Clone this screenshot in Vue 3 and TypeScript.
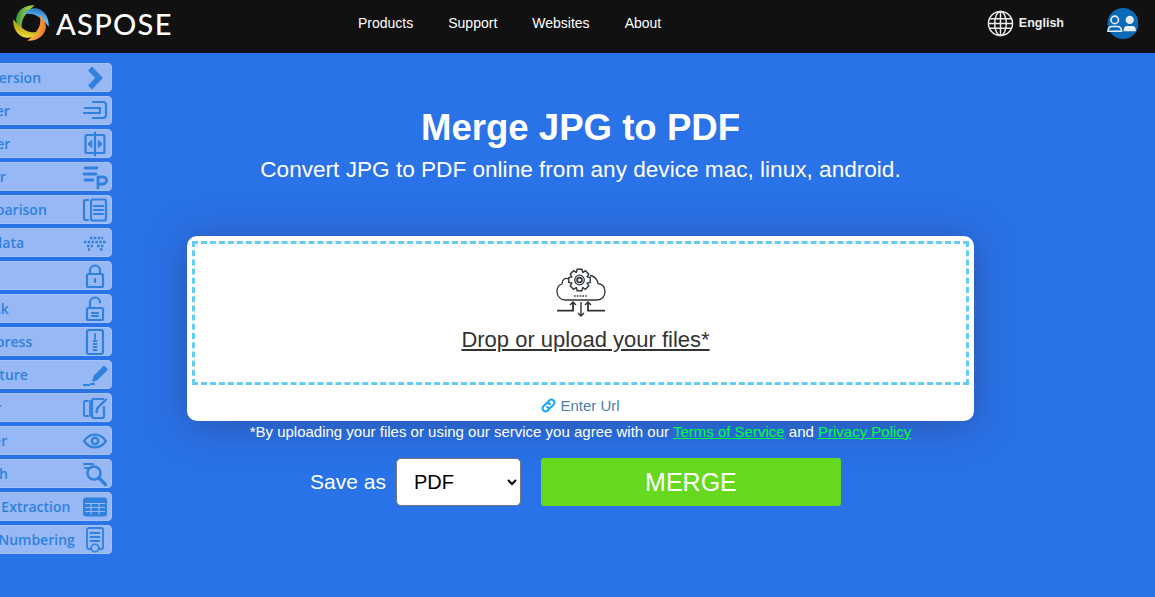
<script setup lang="ts">
const navLinks = ["Products", "Support", "Websites", "About"];

const sideItems = [
  { label: "Conversion", icon: "chevron", shift: 0 },
  { label: "Merger", icon: "merge", shift: 4 },
  { label: "Splitter", icon: "split", shift: 4 },
  { label: "Parser", icon: "parser", shift: 3 },
  { label: "Comparison", icon: "compare", shift: 0 },
  { label: "Metadata", icon: "meta", shift: 6 },
  { label: "Lock", icon: "lock", shift: 0, hidden: true },
  { label: "Unlock", icon: "unlock", shift: 3 },
  { label: "Compress", icon: "zip", shift: 0 },
  { label: "Signature", icon: "sign", shift: 2 },
  { label: "Editor", icon: "edit", shift: 4 },
  { label: "Viewer", icon: "eye", shift: 4 },
  { label: "Search", icon: "search", shift: 3 },
  { label: "Table Extraction", icon: "table", shift: 4 },
  { label: "Page Numbering", icon: "number", shift: 3 },
];

const blades = [
  { angle: 0, id: "blade-green", dark: "#2f9440", light: "#9ccb3b" },
  { angle: 90, id: "blade-blue", dark: "#2378c4", light: "#68bce8" },
  { angle: 180, id: "blade-orange", dark: "#ee7b22", light: "#f9a54a" },
  { angle: 270, id: "blade-yellow", dark: "#f4e03a", light: "#b9a81c" },
];

// gear outline for the upload icon, 8 teeth round (24.5, 14)
const gearPath = (() => {
  const points: string[] = [];
  for (let i = 0; i < 8; i++) {
    const a = (i * Math.PI) / 4;
    const steps: [number, number][] = [
      [8.3, -0.38],
      [11, -0.22],
      [11, 0.22],
      [8.3, 0.38],
    ];
    for (const [r, off] of steps) {
      const x = 24.5 + r * Math.cos(a + off);
      const y = 14 + r * Math.sin(a + off);
      points.push(`${x.toFixed(2)} ${y.toFixed(2)}`);
    }
  }
  return `M${points.join("L")}Z`;
})();
</script>

<template>
  <div class="page">
    <header class="topbar">
      <a class="logo">
        <svg width="36" height="36" viewBox="0 0 36 36" class="logo-mark">
          <defs>
            <linearGradient
              v-for="blade in blades"
              :id="blade.id"
              :key="blade.id"
              gradientUnits="userSpaceOnUse"
              x1="3"
              y1="13"
              x2="13"
              y2="15"
            >
              <stop offset="0" :stop-color="blade.dark" />
              <stop offset="1" :stop-color="blade.light" />
            </linearGradient>
          </defs>
          <path
            v-for="blade in blades"
            :key="blade.angle"
            d="M21.700 .3C13-.5 4.500 4.500 3.200 13 2.800 17 4.500 22 9.500 26 8 22 8.500 16 11 12 13 8.500 17 4 21.700 .3z"
            :fill="`url(#${blade.id})`"
            :transform="`rotate(${blade.angle} 18 18)`"
          />
        </svg>
        <span class="logo-text">ASPOSE</span>
      </a>
      <nav class="nav">
        <a v-for="link in navLinks" :key="link" class="nav-link">{{ link }}</a>
      </nav>
      <div class="lang">
        <svg width="27" height="27" viewBox="0 0 28 28" fill="none" stroke="#eee" stroke-width="1.5">
          <circle cx="14" cy="14" r="12.5" />
          <ellipse cx="14" cy="14" rx="6" ry="12.5" />
          <path d="M14 1.500v25M2.500 9h23M1.500 14h25M2.500 19h23" />
        </svg>
        <span>English</span>
      </div>
      <div class="account">
        <svg width="31" height="31" viewBox="0 0 30 30">
          <circle cx="15.500" cy="15" r="15" fill="#0a6ab5" />
          <g fill="none" stroke="#e6eef5" stroke-width="1.6">
            <circle cx="7.500" cy="11.500" r="3.600" />
            <path d="M1 22.500c0-3 1.500-4.600 4-4.600h5c2.500 0 4 1.600 4 4.600z" />
          </g>
          <circle cx="22" cy="11.500" r="4" fill="#e6eef5" />
          <path d="M16 22.500c0-3.200 1-5 3.500-5h5c2.500 0 3.500 1.800 3.500 5z" fill="#e6eef5" />
        </svg>
      </div>
    </header>

    <aside class="side">
      <a v-for="item in sideItems" :key="item.label" class="side-item">
        <span
          class="side-label"
          :class="{ 'is-hidden': item.hidden }"
          :style="{ marginLeft: `${-item.shift}px` }"
        >{{ item.label }}</span>
        <svg class="side-icon" width="26" height="26" viewBox="0 0 26 26" fill="none" stroke="#2f80df" stroke-width="2.2" stroke-linecap="round" stroke-linejoin="round">
          <path v-if="item.icon === 'chevron'" d="M8 3.500l9 9.500-9 9.500" stroke-width="5.500" stroke-linecap="butt" stroke-linejoin="miter" />
          <g v-else-if="item.icon === 'merge'">
            <path d="M11 4h10a3 3 0 0 1 3 3v10a3 3 0 0 1-3 3H11" />
            <path d="M3 10h15v5H2" />
          </g>
          <g v-else-if="item.icon === 'split'">
            <path d="M11 4H5a1.500 1.500 0 0 0-1.500 1.500v15A1.500 1.500 0 0 0 5 22h6M15 4h6a1.500 1.500 0 0 1 1.500 1.500v15A1.500 1.500 0 0 1 21 22h-6M13 1.500v23" />
            <path d="M9.500 9.500L6 13l3.500 3.500zM16.500 9.500L20 13l-3.500 3.500z" fill="#2f80df" stroke-width="1" />
          </g>
          <g v-else-if="item.icon === 'parser'">
            <path d="M3 4h12M2 10h12M3 16h8" stroke-width="2.800" />
            <path d="M16 24V13h5a3.500 3.500 0 0 1 0 7h-5" stroke-width="2.800" />
          </g>
          <g v-else-if="item.icon === 'compare'">
            <path d="M6 3H4a2 2 0 0 0-2 2v16a2 2 0 0 0 2 2h2" />
            <rect x="9" y="2.500" width="15" height="21" rx="2" />
            <path d="M12 9h9M12 13h9M12 17h9" />
          </g>
          <g v-else-if="item.icon === 'meta'" stroke-width="2.600" stroke-dasharray="2.500 1.300" stroke-linecap="butt">
            <path d="M8 8h13M2 12h23M5 16h6M15 16h7M18 19.500h3M6 19.500h2" />
          </g>
          <g v-else-if="item.icon === 'lock'">
            <rect x="5" y="11" width="16" height="13" rx="1.500" />
            <path d="M8 11V7.500a5 5 0 0 1 10 0V11M13 16v3" />
          </g>
          <g v-else-if="item.icon === 'unlock'">
            <rect x="5" y="12" width="16" height="12" rx="1.500" />
            <path d="M8 12V6.500a5 5 0 0 1 10 0M10 17h6M10 20h6" />
          </g>
          <g v-else-if="item.icon === 'zip'">
            <rect x="5" y="1" width="16" height="24" rx="2" />
            <path d="M13 5v5M11.500 12h3M11.500 15h3M11.500 18h3M11.500 21h3" stroke-width="1.800" />
          </g>
          <g v-else-if="item.icon === 'sign'">
            <path d="M11 19l1.500-5L22 4.500l3 3L15.500 17z" fill="#2f80df" stroke-width="1.500" />
            <path d="M2 23h5M9 22h3" />
          </g>
          <g v-else-if="item.icon === 'edit'">
            <path d="M6 6H3a1 1 0 0 0-1 1v13a1 1 0 0 0 1 1h3M8 6v15" stroke-width="1.800" />
            <path d="M22 12v9a2 2 0 0 1-2 2h-8a2 2 0 0 1-2-2V6a2 2 0 0 1 2-2h9" />
            <path d="M14.500 17l1-4L24 4.500" stroke-width="2.400" />
          </g>
          <g v-else-if="item.icon === 'eye'">
            <path d="M2 13c6-8.500 16-8.500 22 0-6 8.500-16 8.500-22 0z" />
            <circle cx="13" cy="13" r="3.200" stroke-width="2.400" />
          </g>
          <g v-else-if="item.icon === 'search'">
            <path d="M2 3h9M3 7h4" />
            <circle cx="12" cy="12" r="6.500" stroke-width="2.400" />
            <path d="M17 17l6.500 6.500" stroke-width="3.200" />
          </g>
          <g v-else-if="item.icon === 'table'">
            <rect x="1" y="3.500" width="24" height="19" rx="3" fill="#2f80df" stroke="none" />
            <path d="M3 9.500h20M3 13.500h20M3 17.500h20M9 9.500v11M17 9.500v11" stroke="#97b8f4" stroke-width="1.200" stroke-linecap="butt" />
          </g>
          <g v-else-if="item.icon === 'number'">
            <path d="M9 22H7a2 2 0 0 1-2-2V3a2 2 0 0 1 2-2h12a2 2 0 0 1 2 2v17a2 2 0 0 1-2 2h-2" stroke-width="1.800" />
            <path d="M8.500 6h9M8.500 10h9M8.500 14h9" stroke-width="1.800" />
            <circle cx="13" cy="21" r="3.800" stroke-width="1.600" />
          </g>
        </svg>
      </a>
    </aside>

    <main class="main">
      <h1 class="title">Merge JPG to PDF</h1>
      <p class="subtitle">Convert JPG to PDF online from any device mac, linux, android.</p>

      <section class="card">
        <div class="drop">
          <svg width="52" height="52" viewBox="0 0 52 52" fill="none" stroke="#2f3438" stroke-width="1.300" class="drop-icon">
            <path d="M14 13C10 11 7 14 7 18c-3.500 1-5 4.500-5 7.500C2 30.500 6 34 10 34h32c5 0 8-4 8-8 0-5-3-8-7-8.500C42 13 39 10 35 9.500" />
            <path :d="gearPath" stroke-width="1.400" fill="#fff" />
            <circle cx="24.500" cy="14" r="4.800" />
            <circle cx="24.500" cy="14" r="2.400" stroke-width="1.800" />
            <path d="M19 30h14" stroke-dasharray="1.600 1.200" stroke-width="1.600" />
            <path d="M2 44.700h16V36M33 36v8.700h17" stroke-width="1.800" />
            <path d="M15 39l3-3 3 3M30 39l3-3 3 3M26 36v14M23 47l3 3 3-3" stroke-width="1.400" />
          </svg>
          <a class="drop-text">Drop or upload your files*</a>
        </div>
        <div class="url">
          <svg width="15" height="15" viewBox="0 0 16 16" fill="none" stroke="#1ea7ee" stroke-width="2.200" stroke-linecap="round">
            <path d="M7 4.500l2-2a3.200 3.200 0 0 1 4.500 4.500l-2.500 2.500a3.200 3.200 0 0 1-4.500 0" />
            <path d="M9 11.500l-2 2A3.200 3.200 0 0 1 2.500 9L5 6.500a3.200 3.200 0 0 1 4.500 0" />
          </svg>
          <span>Enter Url</span>
        </div>
      </section>

      <p class="terms">
        *By uploading your files or using our service you agree with our
        <a class="terms-link">Terms of Service</a> and <a class="terms-link">Privacy Policy</a>
      </p>

      <div class="actions">
        <label class="save-label" for="save-as">Save as</label>
        <select id="save-as" class="save-select">
          <option>PDF</option>
        </select>
        <button class="merge-btn" type="button">MERGE</button>
      </div>
    </main>
  </div>
</template>

<style>
html,
body {
  margin: 0;
  overflow: hidden;
}
</style>

<style scoped>
.page {
  position: relative;
  width: 1155px;
  height: 597px;
  overflow: hidden;
  background: #2a72e8;
  font-family: "Liberation Sans", Arial, sans-serif;
}

.topbar {
  height: 53px;
  padding: 0 0 7px 13px;
  box-sizing: border-box;
  background: #111111;
  display: flex;
  align-items: center;
}

.logo {
  width: 160px;
  display: flex;
  align-items: center;
  gap: 7px;
  flex: none;
}

.logo-mark {
  flex: none;
}

.logo-text {
  font-family: Lato, sans-serif;
  font-size: 29px;
  font-weight: 500;
  color: #fff;
  letter-spacing: 1.3px;
}

.nav {
  margin-left: 185px;
  display: flex;
  gap: 35px;
}

.nav-link {
  font-size: 14px;
  color: #fff;
}

.lang {
  margin-left: auto;
  display: flex;
  align-items: center;
  gap: 5px;
  font-size: 12.5px;
  font-weight: 700;
  color: #eee;
}

.account {
  margin-left: 43px;
  margin-right: 17px;
  height: 31px;
}

.side {
  position: absolute;
  left: -40px;
  top: 63px;
  width: 152px;
  display: flex;
  flex-direction: column;
  gap: 4px;
}

.side-item {
  height: 29px;
  padding: 0 3px 0 4px;
  box-sizing: border-box;
  border-radius: 4px;
  background: #97b8f4;
  border: 1px solid #a5c2f6;
  display: flex;
  align-items: center;
  justify-content: space-between;
}

.side-label {
  font-family: "Open Sans", sans-serif;
  font-size: 14px;
  font-weight: 600;
  color: #2f80df;
  white-space: nowrap;
}

.side-label.is-hidden {
  visibility: hidden;
}

.side-icon {
  flex: none;
}

.main {
  padding: 54px 0 0 6px;
  display: flex;
  flex-direction: column;
  align-items: center;
}

.title {
  margin: 0;
  font-size: 36.6px;
  line-height: 41px;
  font-weight: 700;
  color: #fff;
}

.subtitle {
  margin: 1px 0 0;
  font-size: 22.6px;
  line-height: 41px;
  color: #fff;
}

.card {
  width: 787px;
  height: 185px;
  margin-top: 46px;
  padding: 5px 5px 0;
  box-sizing: border-box;
  border-radius: 10px;
  background: #fff;
  box-shadow: 0 4px 40px rgba(40, 60, 120, 0.55);
}

.drop {
  height: 144px;
  box-sizing: border-box;
  border: 3px dashed #63cdf6;
  padding-top: 22px;
  display: flex;
  flex-direction: column;
  align-items: center;
}

.drop-icon {
  flex: none;
}

.drop-text {
  margin-top: 8px;
  padding-left: 10px;
  font-size: 22px;
  line-height: 27px;
  color: #333;
  text-decoration: underline;
}

.url {
  margin-top: 12px;
  display: flex;
  justify-content: center;
  align-items: center;
  gap: 4px;
  font-size: 15px;
  color: #4a7fb0;
}

.terms {
  margin: 1px 0 0;
  font-size: 15px;
  line-height: 20px;
  color: #fff;
}

.terms-link {
  color: #00ff3c;
  text-decoration: underline;
}

.actions {
  margin-top: 16px;
  padding-right: 10px;
  display: flex;
  align-items: center;
}

.save-label {
  font-size: 21px;
  color: #fff;
  margin-right: 10px;
}

.save-select {
  width: 125px;
  height: 48px;
  padding-left: 13px;
  box-sizing: border-box;
  border: 1px solid #767676;
  border-radius: 5px;
  background: #fff;
  font-family: inherit;
  font-size: 20px;
  color: #000;
}

.merge-btn {
  width: 300px;
  height: 48px;
  margin-left: 20px;
  border: none;
  border-radius: 3px;
  background: #66d91f;
  font-family: inherit;
  font-size: 25px;
  color: #fff;
}
</style>
